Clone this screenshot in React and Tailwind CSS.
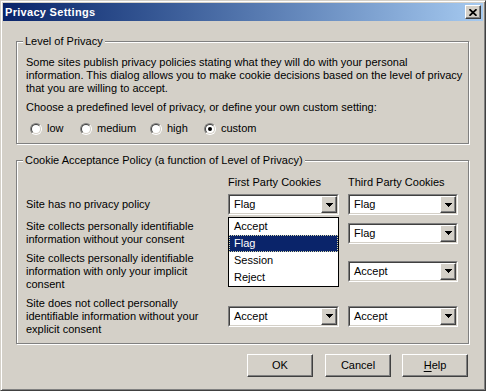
const raised =
  "border border-t-white border-l-white border-r-[#404040] border-b-[#404040] shadow-[inset_-1px_-1px_0_#808080] bg-[#d4d0c8]";

const Arrow = () => (
  <svg width="7" height="4" viewBox="0 0 7 4" shapeRendering="crispEdges">
    <rect x="0" y="0" width="7" height="1" fill="#000" />
    <rect x="1" y="1" width="5" height="1" fill="#000" />
    <rect x="2" y="2" width="3" height="1" fill="#000" />
    <rect x="3" y="3" width="1" height="1" fill="#000" />
  </svg>
);

// Combo box, classic sunken field with a drop button
const Combo = ({ value }) => (
  <div className="flex h-[21px] w-full border border-t-[#808080] border-l-[#808080] border-r-white border-b-white">
    <div className="flex flex-1 border border-t-[#404040] border-l-[#404040] border-r-[#d4d0c8] border-b-[#d4d0c8] bg-white">
      <span className="flex-1 pl-[4px] leading-[17px]">{value}</span>
      <span className={`flex h-full w-[16px] items-center justify-center ${raised}`}>
        <Arrow />
      </span>
    </div>
  </div>
);

const Radio = ({ checked }) => (
  <span className="block h-[12px] w-[12px] rounded-full border border-t-[#808080] border-l-[#808080] border-r-white border-b-white">
    <span className="flex h-full w-full items-center justify-center rounded-full border border-t-[#404040] border-l-[#404040] border-r-[#d4d0c8] border-b-[#d4d0c8] bg-white">
      {checked && <span className="block h-[4px] w-[4px] rounded-full bg-black" />}
    </span>
  </span>
);

const GroupBox = ({ title, className = "", children }) => (
  <fieldset
    className={`border border-[#808080] pl-[9px] shadow-[inset_1px_1px_0_#fff,1px_1px_0_#fff] ${className}`}
  >
    <legend className="ml-[-3px] bg-[#d4d0c8] px-[2px]">{title}</legend>
    {children}
  </fieldset>
);

const levels = [
  { label: "low", width: "w-[50px]" },
  { label: "medium", width: "w-[70px]" },
  { label: "high", width: "w-[54px]" },
  { label: "custom", width: "w-[70px]", checked: true },
];

// first-party combos of rows 2 and 3 sit under the open list, so they show no text
const rows = [
  { text: ["Site has no privacy policy"], first: "Flag", third: "Flag", open: true },
  { text: ["Site collects personally identifiable", "information without your consent"], first: "", third: "Flag" },
  { text: ["Site collects personally identifiable", "information with only your implicit", "consent"], first: "", third: "Accept" },
  { text: ["Site does not collect personally", "identifiable information without your", "explicit consent"], first: "Accept", third: "Accept" },
];

const options = ["Accept", "Flag", "Session", "Reject"];

export default function App() {
  return (
    <div className="h-[391px] w-[486px] border border-t-[#d4d0c8] border-l-[#d4d0c8] border-r-[#404040] border-b-[#404040] bg-[#d4d0c8] p-[2px] font-['Liberation_Sans',Arial,sans-serif] text-[11px] leading-[13px] text-black shadow-[inset_1px_1px_0_#fff,inset_-1px_-1px_0_#808080]">
      {/* Title bar */}
      <div className="flex h-[18px] items-center justify-between bg-linear-to-r from-[#0a246a] to-[#a6caf0] pl-[2px] pr-[2px]">
        <span className="font-bold tracking-[0.3px] text-white">Privacy Settings</span>
        <button className={`flex h-[14px] w-[16px] items-center justify-center ${raised}`}>
          <svg width="8" height="7" viewBox="0 0 8 7">
            <path d="M0.5 0.2L7.5 6.8M7.5 0.2L0.5 6.8" stroke="#000" strokeWidth="1.7" />
          </svg>
        </button>
      </div>

      <div className="pl-[13px] pr-[14px]">
        <GroupBox title="Level of Privacy" className="mt-[14px] pb-[8px] pt-[8px]">
          <p className="whitespace-nowrap">
            Some sites publish privacy policies stating what they will do with your personal
            <br />
            information. This dialog allows you to make cookie decisions based on the level of privacy
            <br />
            that you are willing to accept.
          </p>
          <p className="mt-[6px] whitespace-nowrap">
            Choose a predefined level of privacy, or define your own custom setting:
          </p>
          <div className="ml-[4px] mt-[8px] flex">
            {levels.map((l) => (
              <label key={l.label} className={`flex items-center gap-[5px] ${l.width}`}>
                <Radio checked={l.checked} />
                <span>{l.label}</span>
              </label>
            ))}
          </div>
        </GroupBox>

        <GroupBox
          title="Cookie Acceptance Policy (a function of Level of Privacy)"
          className="mt-[10px] pb-[7px] pt-[9px]"
        >
          <div className="grid grid-cols-[193px_111px_110px] items-center gap-x-[9px] gap-y-[5px]">
            <div />
            <div className="whitespace-nowrap">First Party Cookies</div>
            <div className="whitespace-nowrap">Third Party Cookies</div>
            {rows.map((r, i) => (
              <div key={i} className="contents">
                <div className={`whitespace-nowrap ${i === 2 ? "mt-[1px]" : ""} ${i === 3 ? "mt-[1px]" : ""}`}>
                  {r.text.map((t, j) => (
                    <div key={j}>{t}</div>
                  ))}
                </div>
                <div className="relative">
                  <Combo value={r.first} />
                  {r.open && (
                    <ul className="absolute left-0 top-[23px] z-10 w-full border border-black bg-white">
                      {options.map((o) => (
                        <li
                          key={o}
                          className={
                            o === "Flag"
                              ? "h-[17px] border border-dotted border-[#d8d8a8] bg-[#0a246a] pl-[4px] leading-[15px] text-white"
                              : "h-[17px] pl-[5px] leading-[17px]"
                          }
                        >
                          {o}
                        </li>
                      ))}
                    </ul>
                  )}
                </div>
                <Combo value={r.third} />
              </div>
            ))}
          </div>
        </GroupBox>

        <div className="mr-[1px] mt-[10px] flex justify-end gap-[11px]">
          <button className={`mr-[1px] h-[23px] w-[66px] ${raised}`}>OK</button>
          <button className={`h-[23px] w-[66px] ${raised}`}>Cancel</button>
          <button className={`h-[23px] w-[66px] ${raised}`}>
            <span className="underline underline-offset-2">H</span>elp
          </button>
        </div>
      </div>
    </div>
  );
}
